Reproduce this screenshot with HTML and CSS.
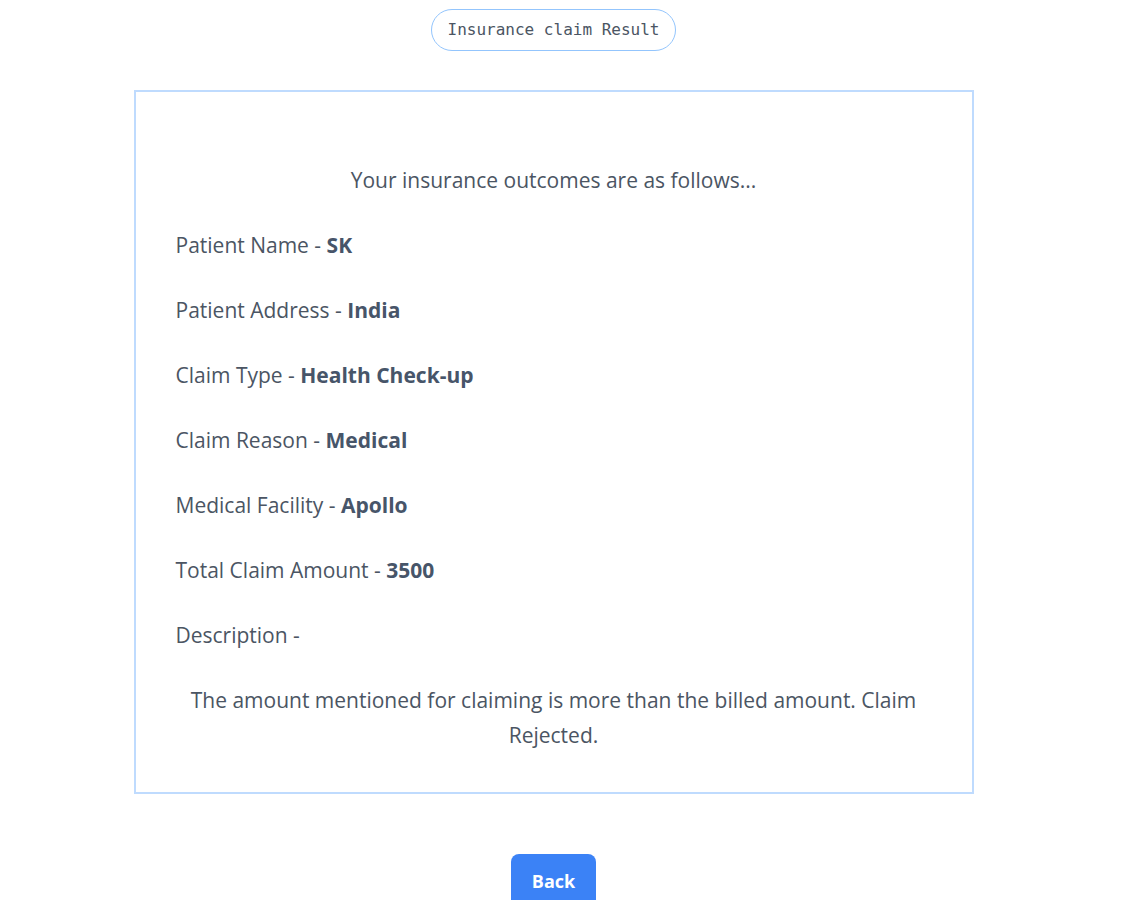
FILE: index.html
```html
<!DOCTYPE html>
<html lang="en">
<head>
<meta charset="utf-8">
<title>Insurance claim Result</title>
<link rel="stylesheet" href="styles.css">
</head>
<body>
<main class="page">
  <div class="badge">Insurance claim Result</div>
  <section class="card">
    <p class="intro">Your insurance outcomes are as follows...</p>
    <p class="row">Patient Name - <strong>SK</strong></p>
    <p class="row">Patient Address - <strong>India</strong></p>
    <p class="row">Claim Type - <strong>Health Check-up</strong></p>
    <p class="row">Claim Reason - <strong>Medical</strong></p>
    <p class="row">Medical Facility - <strong>Apollo</strong></p>
    <p class="row">Total Claim Amount - <strong>3500</strong></p>
    <p class="row">Description -</p>
    <p class="desc">The amount mentioned for claiming is more than the billed amount. Claim Rejected.</p>
  </section>
  <button class="back" type="button">Back</button>
</main>
</body>
</html>
```
FILE: styles.css
```css
html, body {
  margin: 0;
  padding: 0;
  background: #ffffff;
}
body {
  font-family: "Open Sans", "Noto Sans", sans-serif;
  color: #4b5563;
  overflow: hidden;
}
.page {
  width: 1107px;
  display: flex;
  flex-direction: column;
  align-items: center;
  padding-top: 9px;
}
.badge {
  font-family: "DejaVu Sans Mono", "Liberation Mono", monospace;
  font-size: 16px;
  line-height: 24px;
  color: #4b5563;
  border: 1px solid #93c5fd;
  border-radius: 9999px;
  padding: 8px 15.5px;
}
.card {
  box-sizing: border-box;
  width: 840px;
  margin-top: 39px;
  border: 2px solid #bfdbfe;
  padding: 71px 40px 39px;
  display: flex;
  flex-direction: column;
  gap: 30px;
  font-size: 21px;
  line-height: 35px;
}
.card p {
  margin: 0;
}
.intro {
  text-align: center;
}
.row strong {
  font-weight: 700;
  color: #475569;
}
.desc {
  text-align: center;
}
.back {
  margin-top: 60px;
  background: #3b82f6;
  color: #ffffff;
  border: none;
  border-radius: 8px;
  font-family: "Open Sans", "Noto Sans", sans-serif;
  font-weight: 700;
  font-size: 18px;
  line-height: 28px;
  padding: 13px 21px;
}
```
